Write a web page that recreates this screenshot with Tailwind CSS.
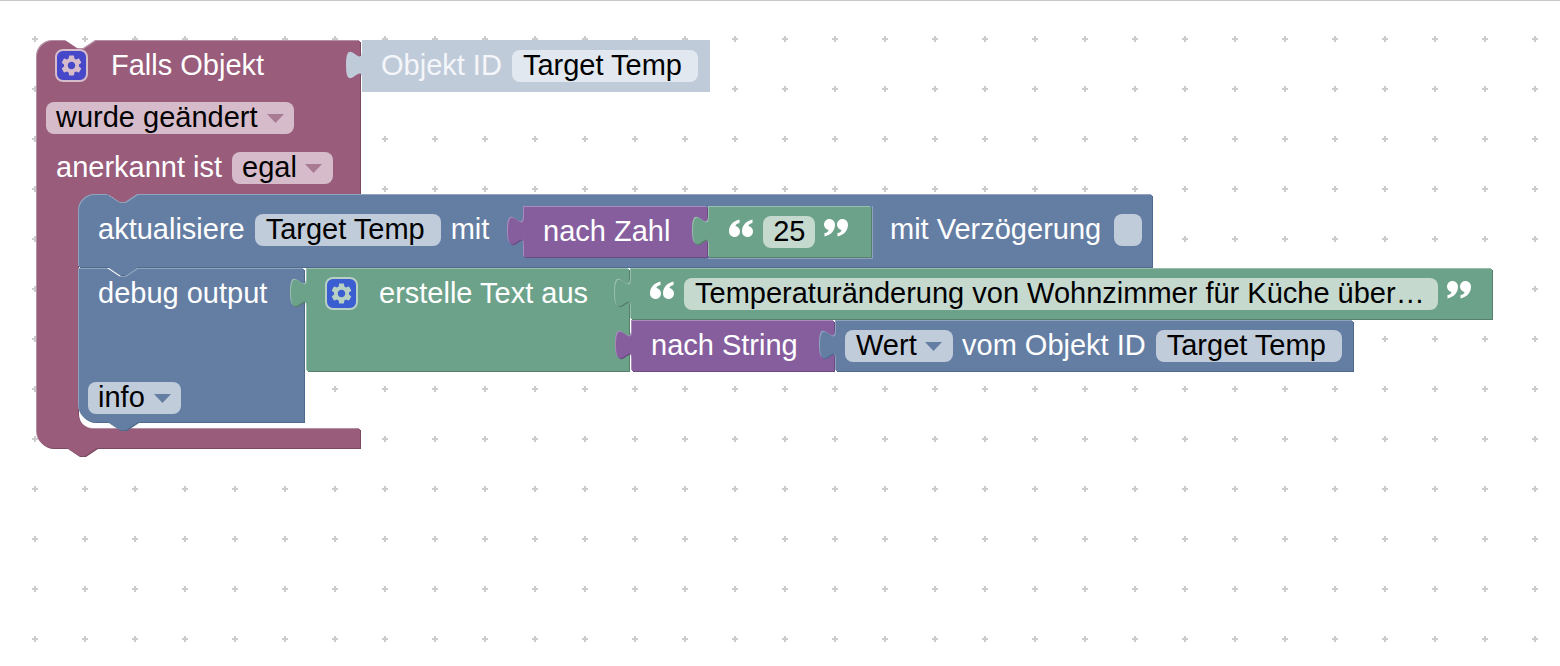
<!DOCTYPE html>
<html lang="en">
<head>
	<meta charset="UTF-8">
	<title>Blockly</title>
	<script src="https://cdn.jsdelivr.net/npm/@tailwindcss/browser@4"></script>
</head>
<body class="bg-white overflow-hidden">

<div class="relative w-[1560px] h-[666px] overflow-hidden bg-white font-['Liberation_Sans',Arial,sans-serif] text-[29px] leading-none text-white">
	<div class="absolute inset-x-0 top-0 h-px bg-[#c8c8c8]"></div>

	<!-- workspace grid and block shapes -->
	<svg class="absolute inset-0" width="1560" height="666" viewBox="0 0 1560 666">
		<defs>
			<pattern id="grid" patternUnits="userSpaceOnUse" x="10" y="14" width="50" height="50">
				<rect x="22" y="24" width="6" height="2" fill="#cccccc"/>
				<rect x="24" y="22" width="2" height="6" fill="#cccccc"/>
			</pattern>
			<path id="hat" d="M37,57 a16,16 0 0 1 16,-16 H66 l12,8 6,0 12,-8 H360 V194 H138 l-12,8 -6,0 -12,-8 H94 a16,16 0 0 0 -16,16 V413 a16,16 0 0 0 16,16 H360 V448 H97 l-12,8 -6,0 -12,-8 H53 a16,16 0 0 1 -16,-16 Z"/>
			<path id="update" d="M79,211 a16,16 0 0 1 16,-16 H108 l12,8 6,0 12,-8 H1152 V267 H138 l-12,8 -6,0 -12,-8 H79 Z"/>
			<path id="debug" d="M79,269 H108 l12,8 6,0 12,-8 H304 V422 H138 l-12,8 -6,0 -12,-8 H95 a16,16 0 0 1 -16,-16 Z"/>
			<path id="objekt" d="M362,40 H710 V92 H362 V80 c0,-20 -16,16 -16,-15 s16,5 16,-15 Z"/>
			<path id="zahl" d="M524,207 H707 V257 H524 V246 c0,-20 -16,16 -16,-15 s16,5 16,-15 Z"/>
			<path id="num" d="M709,207 H871 V257 H709 V246 c0,-20 -16,16 -16,-15 s16,5 16,-15 Z"/>
			<path id="join" d="M307,269 H629 V371 H307 V308 c0,-20 -16,16 -16,-15 s16,5 16,-15 Z"/>
			<path id="text" d="M631,269 H1492 V319 H631 V308 c0,-20 -16,16 -16,-15 s16,5 16,-15 Z"/>
			<path id="string" d="M632,321 H834 V371 H632 V360 c0,-20 -16,16 -16,-15 s16,5 16,-15 Z"/>
			<path id="get" d="M836,321 H1353 V371 H836 V360 c0,-20 -16,16 -16,-15 s16,5 16,-15 Z"/>
		</defs>
		<rect y="1" width="1560" height="665" fill="url(#grid)"/>

		<use href="#hat" fill="#7a4a62" x="1" y="1"/>
		<use href="#hat" fill="#b58fa5" x="-1" y="-1"/>
		<use href="#hat" fill="#995c7b"/>

		<use href="#objekt" fill="#c0cbda"/>

		<use href="#update" fill="#4f6a8c" x="1" y="1"/>
		<use href="#update" fill="#8fa3bf" x="-1" y="-1"/>
		<use href="#update" fill="#647ea3"/>

		<use href="#debug" fill="#4f6a8c" x="1" y="1"/>
		<use href="#debug" fill="#8fa3bf" x="-1" y="-1"/>
		<use href="#debug" fill="#647ea3"/>

		<use href="#zahl" fill="#6a4a80" x="1" y="1"/>
		<use href="#zahl" fill="#a88bba" x="-1" y="-1"/>
		<use href="#zahl" fill="#865e9e"/>

		<path d="M872.500,206 V258.500 H708" fill="none" stroke="#8fa3bf"/>
		<use href="#num" fill="#567f6c" x="1" y="1"/>
		<use href="#num" fill="#98bfad" x="-1" y="-1"/>
		<use href="#num" fill="#6da28a"/>

		<use href="#join" fill="#567f6c" x="1" y="1"/>
		<use href="#join" fill="#98bfad" x="-1" y="-1"/>
		<use href="#join" fill="#6da28a"/>

		<use href="#text" fill="#567f6c" x="1" y="1"/>
		<use href="#text" fill="#98bfad" x="-1" y="-1"/>
		<use href="#text" fill="#6da28a"/>

		<use href="#string" fill="#6a4a80" x="1" y="1"/>
		<use href="#string" fill="#a88bba" x="-1" y="-1"/>
		<use href="#string" fill="#865e9e"/>

		<use href="#get" fill="#4f6a8c" x="1" y="1"/>
		<use href="#get" fill="#8fa3bf" x="-1" y="-1"/>
		<use href="#get" fill="#647ea3"/>

		<symbol id="gear" viewBox="0 0 24 24">
			<path d="M19.14 12.94c.04-.3.06-.61.06-.94 0-.32-.02-.64-.07-.94l2.03-1.58c.18-.14.23-.41.12-.61l-1.92-3.32c-.12-.22-.37-.29-.59-.22l-2.39.96c-.5-.38-1.03-.7-1.62-.94l-.36-2.54c-.04-.24-.24-.41-.48-.41h-3.84c-.24 0-.43.17-.47.41l-.36 2.54c-.59.24-1.13.57-1.62.94l-2.39-.96c-.22-.08-.47 0-.59.22L2.74 8.87c-.12.21-.08.47.12.61l2.03 1.58c-.05.3-.09.63-.09.94s.02.64.07.94l-2.03 1.58c-.18.14-.23.41-.12.61l1.92 3.32c.12.22.37.29.59.22l2.39-.96c.5.38 1.03.7 1.62.94l.36 2.54c.05.24.24.41.48.41h3.84c.24 0 .44-.17.47-.41l.36-2.54c.59-.24 1.13-.56 1.62-.94l2.39.96c.22.08.47 0 .59-.22l1.92-3.32c.12-.22.07-.47-.12-.61l-2.01-1.58zM12 15.6c-1.98 0-3.6-1.62-3.6-3.6s1.62-3.6 3.6-3.6 3.6 1.62 3.6 3.6-1.62 3.6-3.6 3.6z"/>
		</symbol>
		<symbol id="quote" viewBox="0 0 24 18">
			<path d="M10.5 .5 C4 2 0 6.500 0 12.500 a5.500 5.500 0 1 0 6.500 -5.400 C6.500 5.500 8 4.500 10.500 4 Z M23.500 .5 C17 2 13 6.500 13 12.500 a5.500 5.500 0 1 0 6.500 -5.400 C19.500 5.500 21 4.500 23.500 4 Z"/>
		</symbol>
		<symbol id="caret" viewBox="0 0 17 9">
			<path d="M0 0 H17 L8.5 9 Z"/>
		</symbol>
	</svg>

	<!-- hat block -->
	<div class="absolute left-[55px] top-[49px] h-[33px] flex items-center">
		<div class="w-[33px] h-[33px] rounded-[8px] border-2 border-[#d6bccb] bg-[#4747c9] flex items-center justify-center">
			<svg class="w-[25px] h-[25px] fill-[#d6bccb]"><use href="#gear"/></svg>
		</div>
		<span class="ml-[23px]">Falls Objekt</span>
	</div>
	<div class="absolute left-[381px] top-[50px] h-[32px] flex items-center">
		<span class="mb-[2px] text-[#f4f6f9]">Objekt ID</span>
		<span class="ml-[10px] h-[32px] w-[186px] pl-[11px] pb-[2px] rounded-[8px] bg-[#e2e8f0] text-black flex items-center">Target Temp</span>
	</div>
	<div class="absolute left-[46px] top-[102px] h-[32px] w-[248px] pl-[10px] pb-[2px] rounded-[8px] bg-[#d6bccb] text-black flex items-center">
		wurde geändert
		<svg class="ml-[9px] mt-[2px] w-[17px] h-[9px] fill-[#a97b93]"><use href="#caret"/></svg>
	</div>
	<div class="absolute left-[56px] top-[152px] h-[32px] flex items-center">
		<span class="mb-[2px]">anerkannt ist</span>
		<span class="ml-[10px] h-[32px] w-[101px] pl-[10px] pb-[2px] rounded-[8px] bg-[#d6bccb] text-black flex items-center">
			egal
			<svg class="ml-[8px] mt-[2px] w-[17px] h-[9px] fill-[#a97b93]"><use href="#caret"/></svg>
		</span>
	</div>

	<!-- update block -->
	<div class="absolute left-[98px] top-[214px] h-[32px] flex items-center">
		<span class="mb-[2px]">aktualisiere</span>
		<span class="ml-[10px] h-[32px] w-[186px] pl-[11px] pb-[2px] rounded-[8px] bg-[#c1ccdb] text-black flex items-center">Target Temp</span>
		<span class="ml-[10px] mb-[2px]">mit</span>
	</div>
	<div class="absolute left-[543px] top-[216px] h-[32px] flex items-center">
		<span class="mb-[2px]">nach Zahl</span>
		<svg class="ml-[59px] mb-[8px] w-[24px] h-[18px] fill-white"><use href="#quote"/></svg>
		<span class="ml-[10px] h-[32px] w-[52px] pb-[2px] rounded-[8px] bg-[#c5d9cf] text-black flex items-center justify-center">25</span>
		<svg class="ml-[9px] mb-[8px] w-[24px] h-[18px] fill-white rotate-180"><use href="#quote"/></svg>
	</div>
	<div class="absolute left-[890px] top-[214px] h-[32px] flex items-center">
		<span class="mb-[2px]">mit Verzögerung</span>
		<span class="ml-[13px] w-[28px] h-[32px] rounded-[8px] bg-[#c1ccdb]"></span>
	</div>

	<!-- debug block -->
	<div class="absolute left-[98px] top-[277px] h-[32px] flex items-center">debug output</div>
	<div class="absolute left-[325px] top-[277px] h-[33px] flex items-center">
		<div class="w-[33px] h-[33px] rounded-[8px] border-2 border-[#b7d0c4] bg-[#3a5dd2] flex items-center justify-center">
			<svg class="w-[25px] h-[25px] fill-[#b7d0c4]"><use href="#gear"/></svg>
		</div>
		<span class="ml-[21px]">erstelle Text aus</span>
	</div>
	<div class="absolute left-[650px] top-[278px] h-[32px] flex items-center">
		<svg class="mb-[8px] w-[24px] h-[18px] fill-white"><use href="#quote"/></svg>
		<span class="ml-[10px] h-[32px] w-[754px] pl-[11px] pb-[2px] rounded-[8px] bg-[#c5d9cf] text-black flex items-center">Temperaturänderung von Wohnzimmer für Küche über…</span>
		<svg class="ml-[9px] mb-[8px] w-[24px] h-[18px] fill-white rotate-180"><use href="#quote"/></svg>
	</div>
	<div class="absolute left-[651px] top-[329px] h-[32px] flex items-center">nach String</div>
	<div class="absolute left-[845px] top-[330px] h-[32px] flex items-center">
		<span class="h-[32px] w-[108px] pl-[11px] pb-[2px] rounded-[8px] bg-[#c1ccdb] text-black flex items-center">
			Wert
			<svg class="ml-[8px] mt-[2px] w-[17px] h-[9px] fill-[#647ea3]"><use href="#caret"/></svg>
		</span>
		<span class="ml-[9px] mb-[2px]">vom Objekt ID</span>
		<span class="ml-[10px] h-[32px] w-[186px] pl-[11px] pb-[2px] rounded-[8px] bg-[#c1ccdb] text-black flex items-center">Target Temp</span>
	</div>
	<div class="absolute left-[88px] top-[382px] h-[32px] w-[93px] pl-[10px] pb-[2px] rounded-[8px] bg-[#c1ccdb] text-black flex items-center">
		info
		<svg class="ml-[9px] mt-[2px] w-[17px] h-[9px] fill-[#647ea3]"><use href="#caret"/></svg>
	</div>
</div>

</body>
</html>
